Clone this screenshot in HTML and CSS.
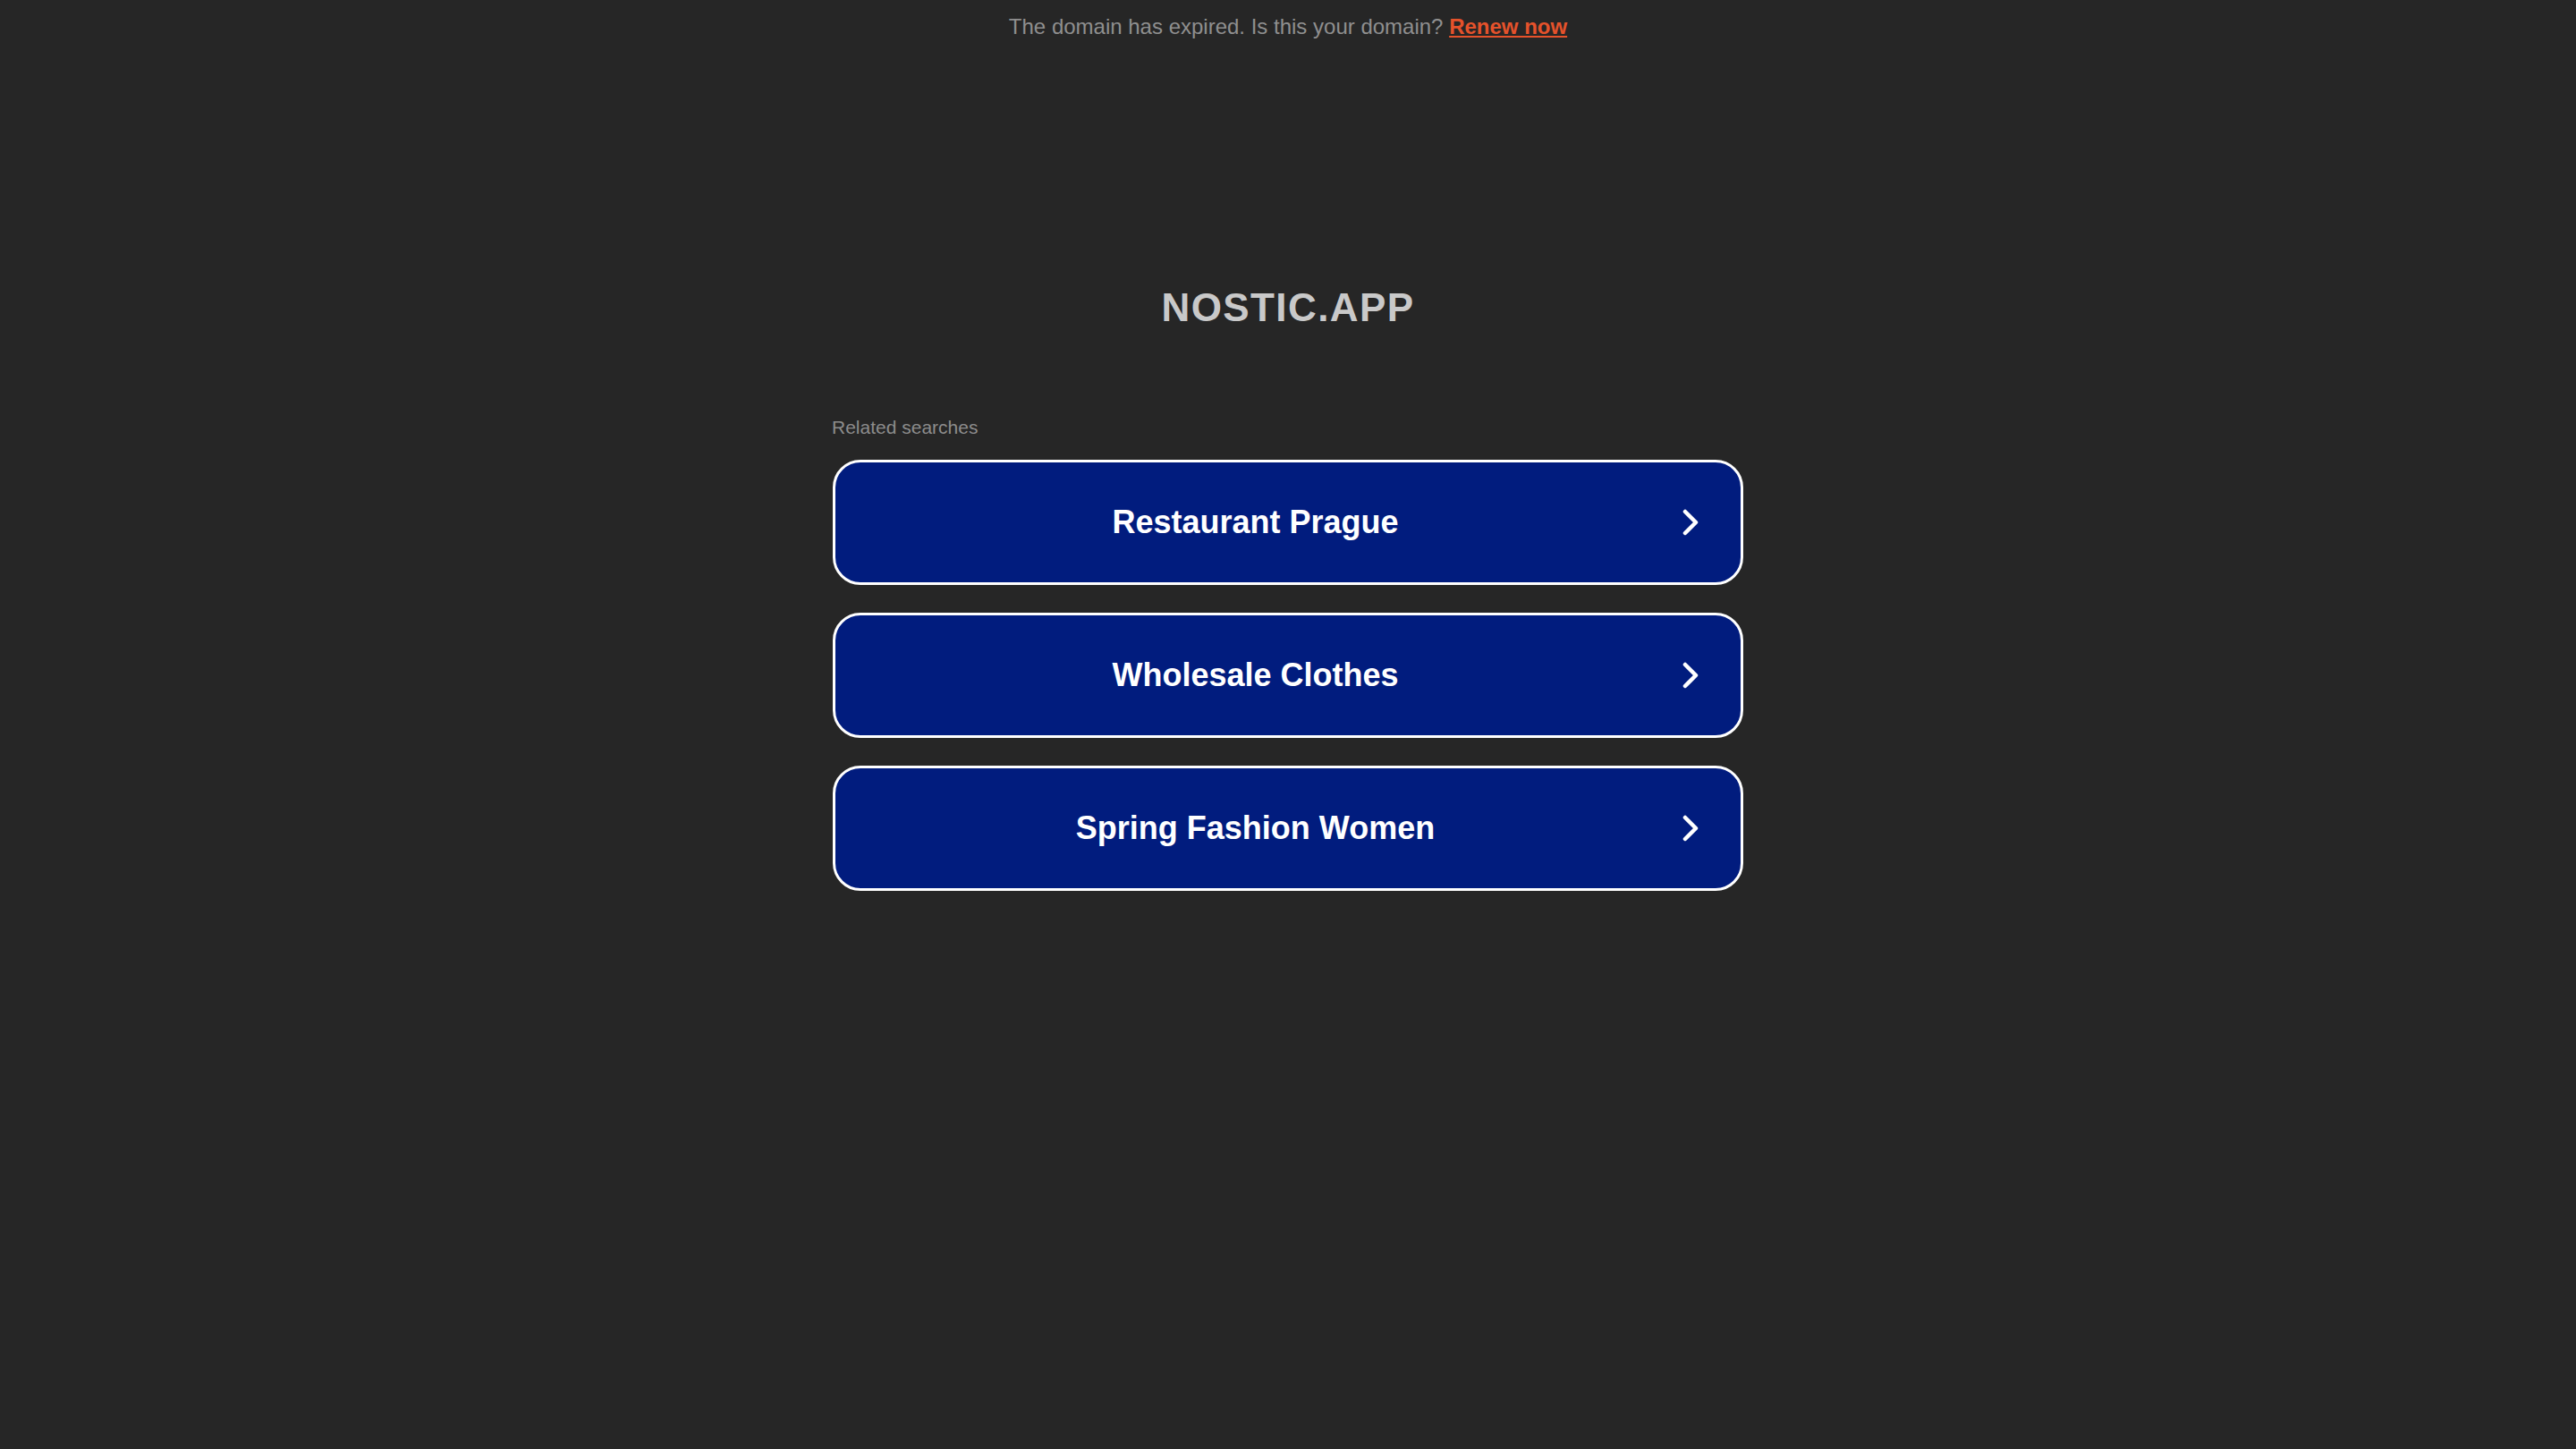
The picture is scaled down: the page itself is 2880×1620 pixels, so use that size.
FILE: index.html
```html
<!DOCTYPE html>
<html>
<head>
    <link rel="stylesheet" href="styles.css">
</head>
<body>
    <div class="notice">
        The domain has expired. Is this your domain? <a href="#" class="renew">Renew now</a>
    </div>
    <h1 class="domain">NOSTIC.APP</h1>
    <div class="searches">
        <div class="searches-label">Related searches</div>
        <div class="search-list">
            <a href="#" class="search-btn">
                <span class="search-text">Restaurant Prague</span>
                <svg class="chevron" viewBox="0 0 18 30" width="18" height="30"><polyline points="3,3 15,15 3,27" /></svg>
            </a>
            <a href="#" class="search-btn">
                <span class="search-text">Wholesale Clothes</span>
                <svg class="chevron" viewBox="0 0 18 30" width="18" height="30"><polyline points="3,3 15,15 3,27" /></svg>
            </a>
            <a href="#" class="search-btn">
                <span class="search-text">Spring Fashion Women</span>
                <svg class="chevron" viewBox="0 0 18 30" width="18" height="30"><polyline points="3,3 15,15 3,27" /></svg>
            </a>
        </div>
    </div>
</body>
</html>
```

FILE: styles.css
```css
body {
    margin: 0;
    background: #262626;
    font-family: "Liberation Sans", Arial, sans-serif;
    min-height: 100vh;
}

.notice {
    text-align: center;
    padding-top: 17px;
    font-size: 24px;
    line-height: 26px;
    color: #8f8f8f;
}

.renew {
    color: #e5522b;
    font-weight: bold;
    text-decoration: underline;
}

.domain {
    margin: 275px 0 0;
    text-align: center;
    font-size: 44px;
    line-height: 52px;
    letter-spacing: 1.4px;
    font-weight: bold;
    color: #c9c9c9;
}

.searches {
    width: 1018px;
    margin: 96px auto 0;
}

.searches-label {
    font-size: 21px;
    line-height: 24px;
    color: #8c8c8c;
    margin-left: -1px;
}

.search-list {
    display: flex;
    flex-direction: column;
    gap: 31px;
    margin-top: 24px;
}

.search-btn {
    display: flex;
    align-items: center;
    box-sizing: border-box;
    height: 140px;
    background: #011c7e;
    border: 3px solid #ffffff;
    border-radius: 31px;
    color: #ffffff;
    text-decoration: none;
}

.search-text {
    flex: 1;
    text-align: center;
    font-size: 36px;
    font-weight: bold;
}

.chevron {
    margin: 0 47px 0 8px;
    fill: none;
    stroke: #ffffff;
    stroke-width: 4.5;
    stroke-linecap: round;
    stroke-linejoin: round;
}
```
